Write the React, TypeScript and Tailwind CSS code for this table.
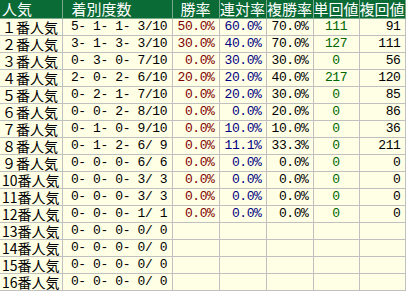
const rows: [string, string, string, string, string, string, string][] = [
  ["１番人気", " 5- 1- 1- 3/10", "50.0%", "60.0%", "70.0%", "111", "91"],
  ["２番人気", " 3- 1- 3- 3/10", "30.0%", "40.0%", "70.0%", "127", "111"],
  ["３番人気", " 0- 3- 0- 7/10", "0.0%", "30.0%", "30.0%", "0", "56"],
  ["４番人気", " 2- 0- 2- 6/10", "20.0%", "20.0%", "40.0%", "217", "120"],
  ["５番人気", " 0- 2- 1- 7/10", "0.0%", "20.0%", "30.0%", "0", "85"],
  ["６番人気", " 0- 0- 2- 8/10", "0.0%", "0.0%", "20.0%", "0", "86"],
  ["７番人気", " 0- 1- 0- 9/10", "0.0%", "10.0%", "10.0%", "0", "36"],
  ["８番人気", " 0- 1- 2- 6/ 9", "0.0%", "11.1%", "33.3%", "0", "211"],
  ["９番人気", " 0- 0- 0- 6/ 6", "0.0%", "0.0%", "0.0%", "0", "0"],
  ["10番人気", " 0- 0- 0- 3/ 3", "0.0%", "0.0%", "0.0%", "0", "0"],
  ["11番人気", " 0- 0- 0- 3/ 3", "0.0%", "0.0%", "0.0%", "0", "0"],
  ["12番人気", " 0- 0- 0- 1/ 1", "0.0%", "0.0%", "0.0%", "0", "0"],
  ["13番人気", " 0- 0- 0- 0/ 0", "", "", "", "", ""],
  ["14番人気", " 0- 0- 0- 0/ 0", "", "", "", "", ""],
  ["15番人気", " 0- 0- 0- 0/ 0", "", "", "", "", ""],
  ["16番人気", " 0- 0- 0- 0/ 0", "", "", "", "", ""],
];

const jp = "font-['Noto_Sans_CJK_JP',sans-serif]";
const mono = "font-['Liberation_Mono','Noto_Sans_CJK_JP',monospace] text-[13px] tracking-[-0.4px] whitespace-pre";
const th = "border border-[#7aa88a] border-t-0 font-normal p-0";
const td = "border border-[#c0c0c0] p-0";

export default function App() {
  return (
    <div className="w-[408px] h-[292px] bg-white overflow-hidden">
      <table className="border-collapse table-fixed w-[405px] bg-[#ffffe6] text-black">
        <colgroup>
          <col className="w-[62px]" />
          <col className="w-[110px]" />
          <col className="w-[47px]" />
          <col className="w-[47px]" />
          <col className="w-[47px]" />
          <col className="w-[46px]" />
          <col className="w-[46px]" />
        </colgroup>
        <thead>
          <tr className={`bg-[#0b6b36] text-white text-[15px] leading-[17px] h-[18px] ${jp}`}>
            <th className={`${th} border-l-0 text-left pl-[2px]`}>人気</th>
            <th className={`${th} text-left pl-[9px]`}>着別度数</th>
            <th className={th}>勝率</th>
            <th className={th}>連対率</th>
            <th className={th}>複勝率</th>
            <th className={th}>単回値</th>
            <th className={th}>複回値</th>
          </tr>
        </thead>
        <tbody>
          {rows.map((r) => (
            <tr key={r[0]} className="h-[17px] leading-[16px]">
              <td className={`${td} border-l-0 text-[14px] pl-[2px] whitespace-nowrap ${jp}`}>{r[0]}</td>
              <td className={`${td} pl-[1px] ${mono}`}>{r[1]}</td>
              <td className={`${td} text-right pr-[4px] text-[#800000] ${mono}`}>{r[2]}</td>
              <td className={`${td} text-right pr-[4px] text-[#000080] ${mono}`}>{r[3]}</td>
              <td className={`${td} text-right pr-[4px] ${mono}`}>{r[4]}</td>
              <td className={`${td} text-center text-[#006600] ${mono}`}>{r[5]}</td>
              <td className={`${td} text-right pr-[4px] ${mono}`}>{r[6]}</td>
            </tr>
          ))}
        </tbody>
      </table>
    </div>
  );
}
